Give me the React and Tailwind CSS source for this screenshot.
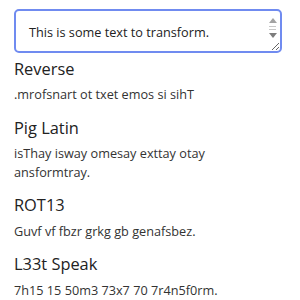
import React from "react";

const items = [
  ["Reverse", ".mrofsnart ot txet emos si sihT"],
  ["Pig Latin", "isThay isway omesay exttay otay ansformtray."],
  ["ROT13", "Guvf vf fbzr grkg gb genafsbez."],
  ["L33t Speak", "7h15 15 50m3 73x7 70 7r4n5f0rm."],
];

export default function App() {
  return (
    <div
      className="min-h-[300px] bg-white px-[14px] pt-[9px] text-[#333]"
      style={{ fontFamily: '"Open Sans", sans-serif' }}
    >
      <div className="w-[268px]">
        <div className="relative">
          <textarea
            className="block h-[44px] w-full resize overflow-hidden rounded-[5px] border-2 border-[#708bf0] py-3 pl-[13px] pr-[18px] text-[12.7px] leading-[18.5px] text-[#222] outline-none"
            defaultValue="This is some text to transform."
          />
          <div className="pointer-events-none absolute right-[2px] top-[2px] flex w-[15px] flex-col items-center">
            <svg width="8" height="5" viewBox="0 0 8 5" className="mt-[7px]">
              <polygon points="4,0 8,5 0,5" fill="#a3a3a3" />
            </svg>
            <div className="mt-[3px] h-[1px] w-[7px] bg-[#c8c8c8]" />
            <div className="mt-[2px] h-[1px] w-[7px] bg-[#c8c8c8]" />
            <svg width="8" height="5" viewBox="0 0 8 5" className="mt-[3px]">
              <polygon points="0,0 8,0 4,5" fill="#7d7d7d" />
            </svg>
          </div>
        </div>
        <div className="mt-[6px] flex flex-col gap-[14.35px]">
          {items.map(([title, body]) => (
            <div key={title} className="flex flex-col gap-[6.15px]">
              <h2 className="text-[16.4px] leading-[20px] text-[#222]">{title}</h2>
              <p className="text-[12.7px] leading-[18.5px]">{body}</p>
            </div>
          ))}
        </div>
      </div>
    </div>
  );
}
